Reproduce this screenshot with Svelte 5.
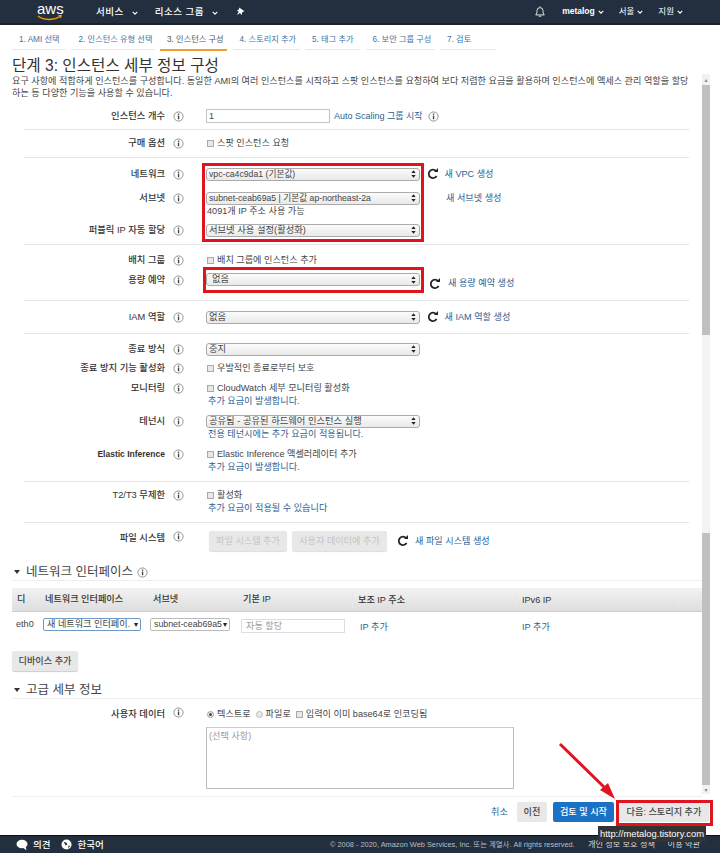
<script>
  const tabs = [
    { t: '1. AMI 선택', w: 54 },
    { t: '2. 인스턴스 유형 선택', w: 83 },
    { t: '3. 인스턴스 구성', w: 67, active: true },
    { t: '4. 스토리지 추가', w: 67 },
    { t: '5. 태그 추가', w: 55 },
    { t: '6. 보안 그룹 구성', w: 69 },
    { t: '7. 검토', w: 56 }
  ];
</script>

{#snippet info()}
  <svg class="info" viewBox="0 0 12 12" aria-hidden="true">
    <circle cx="6" cy="6" r="5" fill="#fff" stroke="#8a8a8a" />
    <rect x="5.3" y="5" width="1.5" height="4" fill="#444" />
    <rect x="5.3" y="2.8" width="1.5" height="1.4" fill="#444" />
  </svg>
{/snippet}

{#snippet refresh()}
  <svg class="refresh" viewBox="0 0 14 14" aria-hidden="true">
    <path d="M11.2 9.4A4.9 4.9 0 1 1 10.6 3.6" fill="none" stroke="#222" stroke-width="2" />
    <path d="M8.2 4.7h4.6V0z" fill="#222" />
  </svg>
{/snippet}

{#snippet sel(text, variant = '')}
  <div class="sel {variant}">
    <span class="sel-text">{text}</span>
    <svg class="updown" viewBox="0 0 6 9" aria-hidden="true"><path d="M3 0l2.6 3.4H.4zM3 9L.4 5.6h5.2z" fill="#222" /></svg>
  </div>
{/snippet}

{#snippet caret()}
  <svg class="caret" viewBox="0 0 8 5" aria-hidden="true"><path d="M1 1l3 3 3-3" fill="none" stroke="#fff" stroke-width="1.5" /></svg>
{/snippet}

<div class="page">
  <header class="topbar">
    <div class="logo">
      <span class="aws">aws</span>
      <svg class="smile" viewBox="0 0 26 6" aria-hidden="true">
        <path d="M1 1c6 4.500 16 4.500 22 .5" fill="none" stroke="#f90" stroke-width="1.500" />
        <path d="M21 0l4-.2-1 3.700z" fill="#f90" />
      </svg>
    </div>
    <nav class="nav-left">
      <span class="nav-item">서비스{@render caret()}</span>
      <span class="nav-item groups">리소스 그룹{@render caret()}</span>
      <svg class="pin" viewBox="0 0 10 10" aria-hidden="true"><path d="M3.500.5l6 4.200-2.500.8-.6 3.500-2-2.200L1 9l2-3.800L1 3.500l2.400-.6z" fill="#fff" /></svg>
    </nav>
    <nav class="nav-right">
      <svg class="bell" viewBox="0 0 14 14" aria-hidden="true">
        <path d="M2 11c1.500-1.500 1.500-3 1.500-5a3.500 3.500 0 0 1 7 0c0 2 0 3.500 1.500 5z" fill="none" stroke="#fff" />
        <path d="M5.500 12.500h3M7 1v1" stroke="#fff" />
      </svg>
      <span class="nr-item user">metalog{@render caret()}</span>
      <span class="nr-item">서울{@render caret()}</span>
      <span class="nr-item">지원{@render caret()}</span>
    </nav>
  </header>

  <ul class="tabs">
    {#each tabs as tab}
      <li class="tab" class:active={tab.active} style:width="{tab.w}px">{tab.t}</li>
    {/each}
  </ul>

  <h1>단계 3: 인스턴스 세부 정보 구성</h1>

  <div class="scroller">
    <main class="content">
      <p class="desc">요구 사항에 적합하게 인스턴스를 구성합니다. 동일한 AMI의 여러 인스턴스를 시작하고 스팟 인스턴스를 요청하여 보다 저렴한 요금을 활용하며 인스턴스에 액세스 관리 역할을 할당<br />하는 등 다양한 기능을 사용할 수 있습니다.</p>

      <section class="group g1">
        <div class="row">
          <label class="lab">인스턴스 개수</label>{@render info()}
          <div class="val inline">
            <input class="count" value="1" />
            <a class="as-link">Auto Scaling 그룹 시작</a>{@render info()}
          </div>
        </div>
      </section>

      <section class="group g2">
        <div class="row">
          <label class="lab">구매 옵션</label>{@render info()}
          <div class="val check"><i class="box"></i>스팟 인스턴스 요청</div>
        </div>
      </section>

      <section class="group g3">
        <div class="row">
          <label class="lab">네트워크</label>{@render info()}
          <div class="val inline">{@render sel('vpc-ca4c9da1 (기본값)', 'latin')}{@render refresh()}<a class="side">새 VPC 생성</a></div>
        </div>
        <div class="row m10">
          <label class="lab">서브넷</label>{@render info()}
          <div class="val inline">{@render sel('subnet-ceab69a5 | 기본값 ap-northeast-2a', 'latin')}<a class="side nosvg">새 서브넷 생성</a></div>
        </div>
        <div class="note dark">4091개 IP 주소 사용 가능</div>
        <div class="row m5">
          <label class="lab">퍼블릭 IP 자동 할당</label>{@render info()}
          <div class="val">{@render sel('서브넷 사용 설정(활성화)')}</div>
        </div>
      </section>

      <section class="group g4">
        <div class="row">
          <label class="lab">배치 그룹</label>{@render info()}
          <div class="val check"><i class="box"></i>배치 그룹에 인스턴스 추가</div>
        </div>
        <div class="row m6 capacity">
          <label class="lab">용량 예약</label>{@render info()}
          <div class="val inline">{@render sel('없음', 'indent')}{@render refresh()}<a class="side">새 용량 예약 생성</a></div>
        </div>
      </section>

      <section class="group g5">
        <div class="row">
          <label class="lab">IAM 역할</label>{@render info()}
          <div class="val inline">{@render sel('없음')}{@render refresh()}<a class="side">새 IAM 역할 생성</a></div>
        </div>
      </section>

      <section class="group g6">
        <div class="row">
          <label class="lab">종료 방식</label>{@render info()}
          <div class="val">{@render sel('중지')}</div>
        </div>
        <div class="row m5">
          <label class="lab">종료 방지 기능 활성화</label>{@render info()}
          <div class="val check"><i class="box"></i>우발적인 종료로부터 보호</div>
        </div>
        <div class="row m6">
          <label class="lab">모니터링</label>{@render info()}
          <div class="val check"><i class="box"></i>CloudWatch 세부 모니터링 활성화</div>
        </div>
        <a class="note">추가 요금이 발생합니다.</a>
        <div class="row m6">
          <label class="lab">테넌시</label>{@render info()}
          <div class="val">{@render sel('공유됨 - 공유된 하드웨어 인스턴스 실행')}</div>
        </div>
        <a class="note">전용 테넌시에는 추가 요금이 적용됩니다.</a>
        <div class="row m6">
          <label class="lab elastic">Elastic Inference</label>{@render info()}
          <div class="val check"><i class="box"></i>Elastic Inference 액셀러레이터 추가</div>
        </div>
        <a class="note">추가 요금이 발생합니다.</a>
      </section>

      <section class="group g7">
        <div class="row">
          <label class="lab">T2/T3 무제한</label>{@render info()}
          <div class="val check"><i class="box"></i>활성화</div>
        </div>
        <a class="note">추가 요금이 적용될 수 있습니다</a>
      </section>

      <section class="group g8">
        <div class="row fs">
          <label class="lab">파일 시스템</label>{@render info()}
          <div class="val inline">
            <button class="btn-dis add">파일 시스템 추가</button>
            <button class="btn-dis data">사용자 데이터에 추가</button>
            {@render refresh()}<a class="side">새 파일 시스템 생성</a>
          </div>
        </div>
      </section>

      <h2 class="sec sec-net"><i class="tri"></i>네트워크 인터페이스 {@render info()}</h2>
      <div class="table">
        <div class="thead">
          <span>디</span><span>네트워크 인터페이스</span><span>서브넷</span><span>기본 IP</span><span>보조 IP 주소</span><span>IPv6 IP</span><span></span>
        </div>
        <div class="tbody">
          <span class="eth">eth0</span>
          <span class="cell-sel focus">새 네트워크 인터페이.<b>▾</b></span>
          <span class="cell-sel sub">subnet-ceab69a5<b>▾</b></span>
          <span class="ip">자동 할당</span>
          <a class="tlink">IP 추가</a>
          <a class="tlink">IP 추가</a>
        </div>
      </div>
      <button class="btn-device">디바이스 추가</button>

      <h2 class="sec sec-adv"><i class="tri"></i>고급 세부 정보</h2>
      <div class="row user-row">
        <label class="lab">사용자 데이터</label>{@render info()}
        <div class="val">
          <div class="radios"><i class="radio on"></i>텍스트로<i class="radio"></i>파일로<i class="box"></i>입력이 이미 base64로 인코딩됨</div>
          <div class="ta">(선택 사항)</div>
        </div>
      </div>
      <hr class="end" />

      <div class="actions">
        <a class="cancel">취소</a>
        <button class="btn-gray prev">이전</button>
        <button class="btn-blue">검토 및 시작</button>
        <button class="btn-gray next">다음: 스토리지 추가</button>
      </div>
    </main>

    <div class="scrollbar" aria-hidden="true">
      <span class="sb-arrow up">▴</span>
      <div class="thumb thumb-a"></div>
      <div class="sb-gap"></div>
      <div class="thumb thumb-b"></div>
      <span class="sb-arrow">▾</span>
    </div>
  </div>

  <footer class="footbar">
    <svg class="fb-ic" viewBox="0 0 12 11" aria-hidden="true"><ellipse cx="6" cy="4.500" rx="5.500" ry="4.300" fill="#fff" /><path d="M7 8l3.500 3-.8-4z" fill="#fff" /></svg>
    <span class="fb-t">의견</span>
    <svg class="fb-ic globe" viewBox="0 0 12 12" aria-hidden="true"><circle cx="6" cy="6" r="5.500" fill="#fff" /><path d="M3 3l3 1 1 2-2 1zM8 7l2 .5-2 2.500z" fill="#232f3e" /></svg>
    <span class="fb-t">한국어</span>
    <span class="copy">© 2008 - 2020, Amazon Web Services, Inc. 또는 계열사. All rights reserved.</span>
    <span class="fl priv">개인 정보 보호 정책</span>
    <span class="fl">이용 약관</span>
  </footer>

  <div class="redbox b1"></div>
  <div class="redbox b2"></div>
  <div class="redbox b3"></div>
  <svg class="arrow-over" viewBox="0 0 60 60" aria-hidden="true">
    <path d="M3 3L47 46" stroke="#e0141f" stroke-width="3" fill="none" />
    <path d="M58 58L43 49L51 42z" fill="#e0141f" />
  </svg>
  <div class="tooltip">http://metalog.tistory.com</div>
</div>

<style>
  :global(body) { margin: 0; background: #fff; }
  .page {
    position: relative; width: 720px; height: 853px; overflow: hidden;
    font-family: "Liberation Sans", "Noto Sans CJK KR", sans-serif;
    font-size: 9.150px; line-height: 13px; color: #444;
  }
  a { color: #2b5f94; text-decoration: none; }
  .topbar {
    height: 23px; background: #232f3e; border-bottom: 2px solid #1a222c;
    display: flex; align-items: center; color: #fff; font-size: 9.500px;
    position: relative;
  }
  .logo { position: relative; margin-left: 37px; width: 26px; height: 20px; }
  .aws { font-size: 15px; line-height: 15px; display: block; text-align: center; margin-top: -1px; }
  .smile { position: absolute; left: 0; top: 13px; width: 26px; height: 6px; }
  .nav-left { display: flex; align-items: center; margin-left: 33px; height: 14px; }
  .nav-item { white-space: nowrap; letter-spacing: .5px; font-weight: 500; }
  .nav-item.groups { margin-left: 17px; }
  .nav-item .caret { margin-left: 8px; }
  .caret { width: 6px; height: 4px; margin-left: 3px; }
  .pin { width: 9px; height: 9px; margin-left: 18px; }
  .nav-right { display: flex; align-items: center; margin-left: auto; margin-right: 37px; height: 14px; }
  .bell { width: 12px; height: 13px; margin-right: 16px; }
  .nr-item { white-space: nowrap; font-size: 8.500px; margin-left: 15px; }
  .nr-item.user { font-weight: 700; margin-left: 0; }

  .tabs {
    list-style: none; margin: 0; padding: 0 0 0 12px; height: 25px;
    display: flex; gap: 5.500px;
  }
  .tab {
    box-sizing: border-box; height: 25px; padding: 9px 0 0 7px;
    color: #44739f; font-size: 8.200px; line-height: 12px; white-space: nowrap;
    border-bottom: 1px solid #e8e8e8;
  }
  .tab.active { color: #555; border-bottom: 1px solid #f0a030; box-shadow: 0 1px 0 #f0a030; }

  h1 { margin: 0; padding: 6px 0 0 12px; height: 20px; font-size: 15.600px; line-height: 20px; font-weight: 400; color: #333; white-space: nowrap; }

  .scroller { display: flex; height: 760px; margin-top: -6px; }
  .content { width: 702px; flex: none; padding-top: 5px; box-sizing: border-box; }
  .desc { margin: 0; padding: 0 0 0 12px; width: 690px; height: 28px; box-sizing: border-box; font-size: 9.150px; line-height: 12px; white-space: nowrap; }

  .group { margin-left: 24px; width: 665px; border-bottom: 1px solid #e4e4e4; box-sizing: border-box; }
  .g1 { padding-top: 6px; height: 27px; }
  .g2 { padding-top: 6px; height: 28px; }
  .g3 { padding-top: 9px; height: 87px; }
  .g4 { padding-top: 8px; height: 56px; }
  .g5 { padding-top: 9px; height: 33px; }
  .g6 { padding-top: 8px; height: 148px; }
  .g7 { padding-top: 6px; height: 41px; }
  .g8 { padding-top: 8px; border-bottom: 0; height: 34px; }

  .row { display: flex; align-items: center; min-height: 14px; }
  .lab { width: 141px; flex: none; text-align: right; font-weight: 500; color: #333; font-size: 9.300px; white-space: nowrap; line-height: 14px; }
  .lab.elastic { font-weight: 700; font-size: 8.500px; }
  .info { width: 11px; height: 11px; flex: none; margin: 0 22px 0 8px; }
  .val { flex: 1; min-width: 0; }
  .inline { display: flex; align-items: center; }
  .inline .info { margin: 0 0 0 5px; }
  .m5 { margin-top: 5px; }
  .m6 { margin-top: 6px; }
  .m10 { margin-top: 10px; }

  .count { box-sizing: border-box; width: 124px; height: 14px; border: 1px solid #c4c4c4; padding: 0 2px; font: inherit; font-size: 9px; color: #444; }
  .as-link { margin-left: 4px; font-size: 9px; color: #2b5f94; white-space: nowrap; }

  .check { display: flex; align-items: center; white-space: nowrap; }
  .box { display: inline-block; box-sizing: border-box; width: 7px; height: 7px; border: 1px solid #aaa; background: #e8e8e8; margin: 0 3px 0 1px; flex: none; }

  .sel {
    box-sizing: border-box; width: 214px; height: 13px; flex: none; display: flex; align-items: center; justify-content: space-between;
    border: 1px solid #aaa; border-radius: 3px; background: linear-gradient(#fbfbfb, #e9e9e9);
    padding: 0 3px 0 2px; font-size: 9.300px; color: #444;
  }
  .sel.indent { padding-left: 5px; }
  .sel.latin { font-size: 8.700px; }
  .sel-text { white-space: nowrap; overflow: hidden; }
  .updown { width: 5px; height: 8px; flex: none; }
  .refresh { width: 12px; height: 12px; flex: none; margin-left: 6.500px; }
  .side { margin-left: 6px; white-space: nowrap; }
  .side.nosvg { margin-left: 26px; }
  .capacity .inline { align-items: flex-start; height: 14px; }
  .capacity .refresh { margin: 5px 0 0 9px; }
  .capacity .side { margin: 4px 0 0 7px; }
  .note { display: block; margin-left: 184px; height: 13px; white-space: nowrap; }
  .note.dark { color: #444; margin-left: 183px; }

  .fs { align-items: flex-start; }
  .btn-dis {
    box-sizing: border-box; height: 20px; border: 0; border-radius: 2px; background: #e8e8e8; color: #c4c4c4;
    font: inherit; font-size: 9.150px; padding: 0; box-shadow: 0 1px 1px #ddd;
  }
  .btn-dis.add { width: 78px; margin-left: 3px; }
  .btn-dis.data { width: 95px; margin-left: 5px; }
  .fs .refresh { margin-left: 10px; }

  .sec { display: flex; align-items: flex-end; margin: 0 0 0 12px; width: 690px; box-sizing: border-box; font-size: 12.500px; font-weight: 400; color: #444; line-height: 16px; border-bottom: 1px solid #eee; white-space: nowrap; }
  .sec-net { height: 24px; }
  .sec-adv { margin-top: 8px; height: 20px; }
  .sec .info { margin: 0 0 2px 4px; }
  .tri { width: 0; height: 0; border-left: 3.500px solid transparent; border-right: 3.500px solid transparent; border-top: 4px solid #333; margin: 0 6px 6px 2px; }

  .table { margin: 7px 0 0 12px; width: 690px; }
  .thead { display: grid; grid-template-columns: 28px 108px 90px 114px 164px 162px 24px; height: 24px; align-items: center; background: linear-gradient(#f2f2f2, #dedede); border-bottom: 1px solid #ccc; font-weight: 500; color: #333; box-sizing: border-box; }
  .thead span { padding-left: 5px; }
  .thead span:nth-child(n+5) { border-left: 1px solid #e8e8e8; padding-left: 5px; height: 16px; line-height: 16px; }
  .tbody { display: grid; grid-template-columns: 28px 108px 90px 114px 162px 100px; height: 39px; align-items: start; padding-top: 6px; box-sizing: border-box; color: #444; }
  .eth { padding: 0 0 0 4px; line-height: 13px; }
  .cell-sel { box-sizing: border-box; height: 13px; line-height: 11px; border: 1px solid #bbb; border-radius: 2px; padding: 0 2px 0 3px; display: flex; justify-content: space-between; white-space: nowrap; margin-left: 3px; background: #fff; }
  .cell-sel b { font-weight: 400; color: #222; flex: none; font-size: 8px; }
  .focus { width: 98px; border-color: #6d9bc9; }
  .sub { width: 80px; margin-left: 2px; font-size: 8.800px; }
  .ip { box-sizing: border-box; width: 104px; height: 14px; line-height: 12px; border: 1px solid #ddd; color: #999; padding-left: 4px; margin: 1px 0 0 3px; }
  .tlink { padding: 3px 0 0 8px; line-height: 13px; color: #2b5f94; }

  .btn-device { display: block; margin: 0 0 0 12px; width: 66px; height: 20px; border: 0; border-radius: 2px; background: #e8e8e8; font: inherit; font-weight: 500; color: #444; padding: 0; box-shadow: 0 1px 1px #ccc; }

  .user-row { margin: 8px 0 0 24px; align-items: flex-start; width: 665px; }
  .radios { display: flex; align-items: center; height: 14px; white-space: nowrap; }
  .radio { width: 5px; height: 5px; border-radius: 50%; border: 1px solid #bbb; background: #e8e8e8; margin: 0 3px 0 5px; box-sizing: content-box; flex: none; }
  .radio.on { background: #444; box-shadow: inset 0 0 0 1px #fff; margin-left: 1px; }
  .radios .box { margin-left: 5px; }
  .ta { box-sizing: border-box; margin-top: 6px; width: 308px; height: 62px; border: 1px solid #bbb; border-top-color: #ccc; padding: 2px; color: #999; }
  .end { margin: 7px 0 0 12px; width: 690px; border: 0; border-top: 1px solid #eee; }

  .actions { display: flex; align-items: flex-start; height: 38px; padding-top: 5px; box-sizing: border-box; white-space: nowrap; }
  .cancel { margin-left: 491px; width: 26px; flex: none; line-height: 20px; }
  .actions button { height: 20px; border: 0; border-radius: 2px; padding: 0; font: inherit; font-weight: 500; flex: none; }
  .btn-gray { background: #e8e8e8; color: #444; }
  .prev { width: 30px; }
  .btn-blue { width: 61px; margin-left: 6px; background: #1b72c4; color: #fff; }
  .next { width: 90px; margin-left: 5px; }

  .scrollbar { width: 8px; height: 720px; margin-top: 4px; display: flex; flex-direction: column; align-items: center; }
  .sb-arrow { height: 9px; width: 8px; text-align: center; line-height: 9px; font-size: 6px; color: #888; font-family: "DejaVu Sans", sans-serif; flex: none; background: #f1f1f1; }
  .sb-arrow.up { height: 11px; line-height: 11px; }
  .thumb { width: 8px; background: #c0c0c0; flex: none; }
  .thumb-a { height: 250px; }
  .sb-gap { height: 198px; flex: none; background: #f3f3f3; width: 8px; }
  .thumb-b { height: 252px; }

  .footbar {
    position: absolute; left: 0; right: 0; bottom: 0; height: 18px; box-sizing: border-box; background: #232f3e; color: #ccc;
    display: flex; align-items: center; font-size: 9px; border-top: 1px solid #111;
  }
  .fb-ic { width: 12px; height: 12px; margin-left: 16px; flex: none; }
  .fb-ic.globe { margin-left: 11px; width: 11px; height: 11px; }
  .fb-t { color: #fff; font-weight: 500; margin-left: 5px; white-space: nowrap; font-size: 9.500px; }
  .copy { position: absolute; left: 330px; font-size: 7.400px; color: #b9bec4; white-space: nowrap; }
  .fl { position: absolute; right: 20px; font-size: 8.200px; color: #d8d8d8; white-space: nowrap; }
  .fl.priv { right: 65px; }

  .redbox { position: absolute; box-sizing: border-box; border: 3px solid #e0141f; pointer-events: none; }
  .b1 { left: 202px; top: 163px; width: 222px; height: 79px; }
  .b2 { left: 203px; top: 267px; width: 221px; height: 26px; }
  .b3 { left: 616px; top: 800px; width: 97px; height: 26px; }
  .arrow-over { position: absolute; left: 557px; top: 741px; width: 60px; height: 60px; }
  .tooltip { position: absolute; left: 598px; top: 826px; width: 108px; height: 16px; background: #333; color: #fff; font-size: 9.400px; line-height: 16px; text-align: center; white-space: nowrap; }
</style>
